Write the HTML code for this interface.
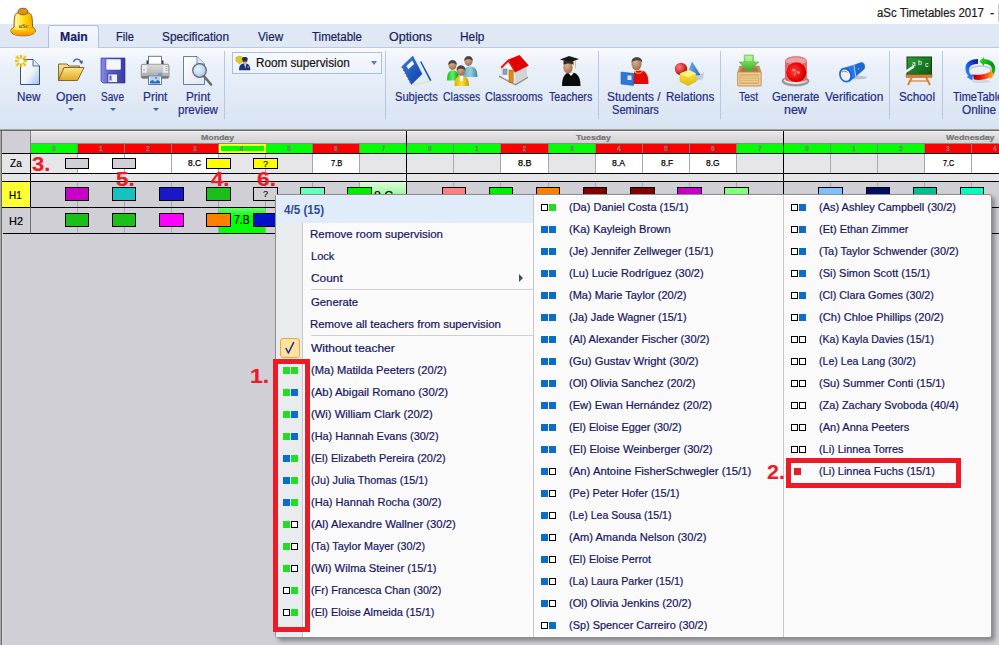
<!DOCTYPE html><html><head><meta charset="utf-8"><style>
*{margin:0;padding:0;box-sizing:border-box}
html,body{width:999px;height:645px;overflow:hidden;background:#d0cfd5;font-family:"Liberation Sans",sans-serif}
.ab{position:absolute}
.t{position:absolute;white-space:nowrap;-webkit-text-stroke:0.2px currentColor}
.sq{position:absolute;width:7px;height:7px}
.sq.o{border:1px solid #000;background:#fff}
.sq.g{background:#22dd22}
.sq.b{background:#0a6ccc}
.sq.r{background:#e0202c}
.box{position:absolute;border:1px solid #000}
</style></head><body>

<div class="ab" style="left:0;top:0;width:999px;height:24px;background:#fff"></div>
<div class="t" style="left:877.49px;top:6.54px;font-size:12px;line-height:12px;color:#1a1a1a;transform:scaleX(0.9537);transform-origin:0 0;">aSc Timetables 2017</div>
<div class="t" style="left:990.13px;top:6.54px;font-size:12px;line-height:12px;color:#1a1a1a;transform:scaleX(1.0544);transform-origin:0 0;">-</div>
<div class="ab" style="left:998px;top:4px;width:1px;height:18px;background:#c8c8c8"></div>
<div class="ab" style="left:0;top:24px;width:999px;height:24px;background:#dfe8f4;border-bottom:1px solid #b9cbe3"></div>
<div class="ab" style="left:48px;top:25px;width:51px;height:23px;background:linear-gradient(#f4f8fd,#e8eff8);border:1px solid #a9c1e2;border-bottom:none;border-radius:3px 3px 0 0"></div>
<div class="t" style="left:59.71px;top:30.74px;font-size:12px;line-height:12px;font-weight:bold;color:#15206a;transform:scaleX(1.0155);transform-origin:0 0;">Main</div>
<div class="t" style="left:115.82px;top:30.74px;font-size:12px;line-height:12px;color:#151e5e;transform:scaleX(0.9203);transform-origin:0 0;">File</div>
<div class="t" style="left:162.47px;top:30.74px;font-size:12px;line-height:12px;color:#151e5e;transform:scaleX(0.9847);transform-origin:0 0;">Specification</div>
<div class="t" style="left:257.94px;top:30.74px;font-size:12px;line-height:12px;color:#151e5e;transform:scaleX(0.9713);transform-origin:0 0;">View</div>
<div class="t" style="left:311.51px;top:30.74px;font-size:12px;line-height:12px;color:#151e5e;transform:scaleX(0.9568);transform-origin:0 0;">Timetable</div>
<div class="t" style="left:389.04px;top:30.74px;font-size:12px;line-height:12px;color:#151e5e;transform:scaleX(1.0401);transform-origin:0 0;">Options</div>
<div class="t" style="left:460.05px;top:30.74px;font-size:12px;line-height:12px;color:#151e5e;transform:scaleX(0.9905);transform-origin:0 0;">Help</div>
<div class="ab" style="left:0;top:48px;width:999px;height:81px;background:linear-gradient(#f8fafd,#e9f0f9 25%,#e0e9f5 65%,#d8e3f2)"></div>
<div class="ab" style="left:0;top:129px;width:999px;height:1px;background:#a2a2a2"></div>
<div class="ab" style="left:0;top:130px;width:999px;height:1px;background:#686868"></div>
<div class="ab" style="left:224px;top:51px;width:1px;height:68px;background:#b6c8e0"></div>
<div class="ab" style="left:385px;top:51px;width:1px;height:68px;background:#b6c8e0"></div>
<div class="ab" style="left:598px;top:51px;width:1px;height:68px;background:#b6c8e0"></div>
<div class="ab" style="left:720px;top:51px;width:1px;height:68px;background:#b6c8e0"></div>
<div class="ab" style="left:889px;top:51px;width:1px;height:68px;background:#b6c8e0"></div>
<div class="ab" style="left:942px;top:51px;width:1px;height:68px;background:#b6c8e0"></div>
<div class="t" style="left:16.66px;top:90.59px;font-size:12px;line-height:12px;color:#1f2c84;transform:scaleX(0.9740);transform-origin:0 0;">New</div>
<div class="t" style="left:55.85px;top:90.59px;font-size:12px;line-height:12px;color:#1f2c84;transform:scaleX(1.0136);transform-origin:0 0;">Open</div>
<div class="t" style="left:100.75px;top:90.59px;font-size:12px;line-height:12px;color:#1f2c84;transform:scaleX(0.8409);transform-origin:0 0;">Save</div>
<div class="t" style="left:142.55px;top:90.59px;font-size:12px;line-height:12px;color:#1f2c84;transform:scaleX(0.9898);transform-origin:0 0;">Print</div>
<div class="t" style="left:185.81px;top:90.59px;font-size:12px;line-height:12px;color:#1f2c84;transform:scaleX(0.9835);transform-origin:0 0;">Print</div>
<div class="t" style="left:178.00px;top:103.84px;font-size:12px;line-height:12px;color:#1f2c84;transform:scaleX(0.9663);transform-origin:0 0;">preview</div>
<div class="t" style="left:395.10px;top:90.59px;font-size:12px;line-height:12px;color:#1f2c84;transform:scaleX(0.9277);transform-origin:0 0;">Subjects</div>
<div class="t" style="left:442.88px;top:90.59px;font-size:12px;line-height:12px;color:#1f2c84;transform:scaleX(0.8718);transform-origin:0 0;">Classes</div>
<div class="t" style="left:485.15px;top:90.59px;font-size:12px;line-height:12px;color:#1f2c84;transform:scaleX(0.9111);transform-origin:0 0;">Classrooms</div>
<div class="t" style="left:548.73px;top:90.59px;font-size:12px;line-height:12px;color:#1f2c84;transform:scaleX(0.8875);transform-origin:0 0;">Teachers</div>
<div class="t" style="left:607.46px;top:90.59px;font-size:12px;line-height:12px;color:#1f2c84;transform:scaleX(0.9914);transform-origin:0 0;">Students /</div>
<div class="t" style="left:611.50px;top:103.84px;font-size:12px;line-height:12px;color:#1f2c84;transform:scaleX(0.9248);transform-origin:0 0;">Seminars</div>
<div class="t" style="left:665.67px;top:90.59px;font-size:12px;line-height:12px;color:#1f2c84;transform:scaleX(0.9638);transform-origin:0 0;">Relations</div>
<div class="t" style="left:739.04px;top:90.59px;font-size:12px;line-height:12px;color:#1f2c84;transform:scaleX(0.8657);transform-origin:0 0;">Test</div>
<div class="t" style="left:771.73px;top:90.59px;font-size:12px;line-height:12px;color:#1f2c84;transform:scaleX(0.9468);transform-origin:0 0;">Generate</div>
<div class="t" style="left:784.19px;top:103.84px;font-size:12px;line-height:12px;color:#1f2c84;transform:scaleX(1.0358);transform-origin:0 0;">new</div>
<div class="t" style="left:824.94px;top:90.59px;font-size:12px;line-height:12px;color:#1f2c84;transform:scaleX(0.9941);transform-origin:0 0;">Verification</div>
<div class="t" style="left:899.47px;top:90.59px;font-size:12px;line-height:12px;color:#1f2c84;transform:scaleX(0.9819);transform-origin:0 0;">School</div>
<div class="t" style="left:952.73px;top:90.59px;font-size:12px;line-height:12px;color:#1f2c84;transform:scaleX(0.9139);transform-origin:0 0;">TimeTables</div>
<div class="t" style="left:962.47px;top:103.84px;font-size:12px;line-height:12px;color:#1f2c84;transform:scaleX(0.9821);transform-origin:0 0;">Online</div>
<div class="ab" style="left:67.5px;top:108px;width:0;height:0;border-left:3px solid transparent;border-right:3px solid transparent;border-top:3.5px solid #40609e"></div>
<div class="ab" style="left:109.5px;top:108px;width:0;height:0;border-left:3px solid transparent;border-right:3px solid transparent;border-top:3.5px solid #40609e"></div>
<div class="ab" style="left:152.5px;top:108px;width:0;height:0;border-left:3px solid transparent;border-right:3px solid transparent;border-top:3.5px solid #40609e"></div>
<div class="ab" style="left:232px;top:52px;width:150px;height:22px;border:1px solid #a7bfdf;background:linear-gradient(#f6f9fd,#edf2f9)"></div>
<div class="t" style="left:256.06px;top:56.84px;font-size:12px;line-height:12px;color:#141414;transform:scaleX(0.9754);transform-origin:0 0;">Room supervision</div>
<div class="ab" style="left:371px;top:61px;width:0;height:0;border-left:3.5px solid transparent;border-right:3.5px solid transparent;border-top:4px solid #5a7ab8"></div>

<svg class="ab" style="left:0;top:0" width="999" height="130" viewBox="0 0 999 130">
<defs>
 <linearGradient id="bellg" x1="0" y1="0" x2="1" y2="0"><stop offset="0" stop-color="#f7d020"/><stop offset=".3" stop-color="#fff270"/><stop offset=".6" stop-color="#ffd400"/><stop offset="1" stop-color="#e8a000"/></linearGradient>
 <linearGradient id="rimg" x1="0" y1="0" x2="0" y2="1"><stop offset="0" stop-color="#ffd000"/><stop offset="1" stop-color="#ff8c00"/></linearGradient>
 <linearGradient id="pageg" x1="0" y1="0" x2="1" y2="1"><stop offset="0" stop-color="#ffffff"/><stop offset=".55" stop-color="#eef3fb"/><stop offset="1" stop-color="#9cc0ee"/></linearGradient>
 <linearGradient id="pvg" x1="0" y1="0" x2="1" y2="1"><stop offset="0" stop-color="#ffffff"/><stop offset="1" stop-color="#dfe6ef"/></linearGradient>
 <linearGradient id="foldg" x1="0" y1="0" x2="0" y2="1"><stop offset="0" stop-color="#f6e2a0"/><stop offset="1" stop-color="#d8a830"/></linearGradient>
 <linearGradient id="foldf" x1="0" y1="0" x2="0" y2="1"><stop offset="0" stop-color="#ffe68a"/><stop offset="1" stop-color="#e0a820"/></linearGradient>
 <linearGradient id="saveg" x1="0" y1="0" x2="1" y2="0"><stop offset="0" stop-color="#8c8ce6"/><stop offset=".4" stop-color="#5a5ac8"/><stop offset="1" stop-color="#3a3aa8"/></linearGradient>
 <linearGradient id="prg" x1="0" y1="0" x2="0" y2="1"><stop offset="0" stop-color="#dcdcdc"/><stop offset="1" stop-color="#b8b8b8"/></linearGradient>
 <radialGradient id="lensg" cx=".4" cy=".4" r=".7"><stop offset="0" stop-color="#eaf4ff"/><stop offset="1" stop-color="#9cc4f0"/></radialGradient>
 <linearGradient id="bookg" x1="0" y1="0" x2="1" y2="1"><stop offset="0" stop-color="#3a7ae0"/><stop offset="1" stop-color="#0a40a8"/></linearGradient>
 <radialGradient id="skin" cx=".4" cy=".35" r=".7"><stop offset="0" stop-color="#e0b090"/><stop offset="1" stop-color="#9a6a48"/></radialGradient>
 <linearGradient id="grn" x1="0" y1="0" x2="1" y2="0"><stop offset="0" stop-color="#20c020"/><stop offset=".5" stop-color="#60f060"/><stop offset="1" stop-color="#109010"/></linearGradient>
 <linearGradient id="teal" x1="0" y1="0" x2="1" y2="0"><stop offset="0" stop-color="#5aa8c0"/><stop offset=".5" stop-color="#9ad0e0"/><stop offset="1" stop-color="#3a88a0"/></linearGradient>
 <linearGradient id="yel" x1="0" y1="0" x2="1" y2="0"><stop offset="0" stop-color="#d8b000"/><stop offset=".5" stop-color="#ffe040"/><stop offset="1" stop-color="#c89800"/></linearGradient>
 <linearGradient id="redb" x1="0" y1="0" x2="1" y2="1"><stop offset="0" stop-color="#ff3030"/><stop offset="1" stop-color="#c00000"/></linearGradient>
 <radialGradient id="sph" cx=".35" cy=".35" r=".7"><stop offset="0" stop-color="#ff8080"/><stop offset="1" stop-color="#b00000"/></radialGradient>
 <linearGradient id="cone" x1="0" y1="0" x2="1" y2="0"><stop offset="0" stop-color="#80c0ff"/><stop offset="1" stop-color="#1a68c8"/></linearGradient>
 <linearGradient id="cube" x1="0" y1="0" x2="0" y2="1"><stop offset="0" stop-color="#fff060"/><stop offset="1" stop-color="#e0b800"/></linearGradient>
 <linearGradient id="arrg" x1="0" y1="0" x2="0" y2="1"><stop offset="0" stop-color="#a0f080"/><stop offset="1" stop-color="#30b020"/></linearGradient>
 <linearGradient id="boxg" x1="0" y1="0" x2="0" y2="1"><stop offset="0" stop-color="#f4d8a0"/><stop offset="1" stop-color="#d0a060"/></linearGradient>
 <radialGradient id="sirg" cx=".4" cy=".45" r=".65"><stop offset="0" stop-color="#ff4040"/><stop offset=".7" stop-color="#e80000"/><stop offset="1" stop-color="#a80000"/></radialGradient>
 <linearGradient id="flg" x1="0" y1="0" x2="0" y2="1"><stop offset="0" stop-color="#60a8f8"/><stop offset="1" stop-color="#1050b8"/></linearGradient>
 <linearGradient id="boardg" x1="0" y1="0" x2="1" y2="1"><stop offset="0" stop-color="#30a030"/><stop offset="1" stop-color="#0a5a1a"/></linearGradient>
 <linearGradient id="ttb" x1="1" y1="0" x2="0" y2="1"><stop offset="0" stop-color="#0a1a80"/><stop offset=".5" stop-color="#1a50f0"/><stop offset="1" stop-color="#3aa0ff"/></linearGradient>
 <linearGradient id="ttr" x1="0" y1="0" x2="1" y2="0"><stop offset="0" stop-color="#a00000"/><stop offset=".35" stop-color="#f01010"/><stop offset="1" stop-color="#ffb820"/></linearGradient>
 <linearGradient id="ttg" x1="0" y1="0" x2="1" y2="1"><stop offset="0" stop-color="#20f020"/><stop offset=".6" stop-color="#109010"/><stop offset="1" stop-color="#20c020"/></linearGradient>
</defs>

<!-- bell logo -->
<path d="M17,13 C14.5,14 14,18 14,27 C11.5,28.5 10.5,30 11,32 C13,35 18,35.8 23,35.8 C28,35.8 33,35 35.3,32 C35.8,30 34.8,28.5 32.5,27 C32.5,18 32,14 29,13 Z" fill="url(#bellg)" stroke="#8a5010" stroke-width=".9"/>
<path d="M13.5,28.5 C16,31 30,31 33,28.5 C35,30 35.5,31 35,32 C33,35 28,35.5 23,35.5 C18,35.5 13,35 11.3,32 C11,31 11.8,29.5 13.5,28.5 Z" fill="url(#rimg)"/>
<path d="M16.5,16 C16,20 16,24 16.5,27" stroke="#fffbe0" stroke-width="1.6" fill="none" opacity=".8"/>
<ellipse cx="23" cy="11.5" rx="5" ry="3.3" fill="#d89418" stroke="#7a4a10" stroke-width=".8"/>
<text x="23.5" y="27.5" font-size="6.5" font-weight="bold" text-anchor="middle" fill="#8a4a10" font-family="Liberation Serif" font-style="italic">aSc</text>

<!-- New -->
<path d="M20.5,59.5 L33,59.5 L39.5,66 L39.5,84.5 L20.5,84.5 Z" fill="url(#pageg)" stroke="#3c5274" stroke-width="1"/>
<path d="M33,59.5 L33,66 L39.5,66" fill="#dce8f8" stroke="#3c5274" stroke-width=".8"/>
<rect x="15" y="55" width="12" height="12" fill="#f4e070" opacity=".45"/>
<g stroke="#e8b400" stroke-width="1.6">
<line x1="21" y1="55" x2="21" y2="67"/><line x1="15" y1="61" x2="27" y2="61"/>
<line x1="16.5" y1="56.5" x2="25.5" y2="65.5"/><line x1="25.5" y1="56.5" x2="16.5" y2="65.5"/>
</g>
<circle cx="21" cy="61" r="2.6" fill="#fffce0"/>

<!-- Open -->
<path d="M58.5,80.5 L58.5,64 L67,64 L69,66 L79.5,66 L79.5,69" fill="url(#foldg)" stroke="#7a5a20" stroke-width=".9"/>
<path d="M58.5,80.5 L64,67.5 L84,67.5 L77.5,80.5 Z" fill="url(#foldf)" stroke="#7a5a20" stroke-width=".9"/>
<path d="M73.5,62 C74.5,58.5 79,58 81,61.5" fill="none" stroke="#3a5a98" stroke-width="1.2"/>
<path d="M79,61.5 L83,60.5 L82,64.5 Z" fill="#3a5a98"/>

<!-- Save -->
<path d="M101,58 L125,58 L125,83 L103,83 L101,81 Z" fill="url(#saveg)" stroke="#2a2a88" stroke-width=".6"/>
<rect x="106" y="59" width="15" height="11" rx="1" fill="#f4f6fa" stroke="#4a4ab0" stroke-width=".5"/>
<rect x="108" y="74" width="9.5" height="8.5" fill="#eef0f6" stroke="#20207a" stroke-width=".6"/>
<rect x="109.5" y="75.5" width="2" height="5" fill="#5a5ac8"/>

<!-- Print -->
<rect x="146.5" y="60.5" width="2.5" height="4" fill="#3a3a3a"/><rect x="161" y="60.5" width="2.5" height="4" fill="#3a3a3a"/>
<rect x="148.5" y="56.3" width="13" height="8.5" fill="#fff" stroke="#58708c" stroke-width=".9"/>
<rect x="141.3" y="64.3" width="27.6" height="14" rx="1.5" fill="#ececec" stroke="#686868" stroke-width=".8"/>
<rect x="146.8" y="64.6" width="16.4" height="9" fill="url(#prg)"/>
<rect x="141.7" y="72.8" width="26.8" height="3.4" fill="#b4b4b4"/>
<rect x="141.7" y="76" width="26.8" height="2" fill="#7a7a7a"/>
<rect x="158" y="73.3" width="4.2" height="1.5" fill="#4a9af0"/>
<g fill="#9a9a9a"><rect x="165.5" y="66" width="2" height=".9"/><rect x="165.5" y="68" width="2" height=".9"/><rect x="165.5" y="70" width="2" height=".9"/><rect x="143" y="69.5" width="2" height=".9"/></g>
<rect x="148.5" y="76" width="13" height="8.5" fill="#fff" stroke="#58708c" stroke-width=".9"/>
<rect x="150" y="77" width="10" height="6.5" fill="#a8d8f8"/>
<path d="M150,83.5 L150,81.5 L152.5,80 L155,82 L157.5,80 L160,81.5 L160,83.5 Z" fill="#2a6ac8"/>
<circle cx="156" cy="77.8" r="1" fill="#e85030"/>

<!-- Print preview -->
<path d="M183.5,56.5 L197,56.5 L204.5,64 L204.5,84.5 L183.5,84.5 Z" fill="url(#pvg)" stroke="#5a7090" stroke-width=".9"/>
<path d="M197,56.5 L197,64 L204.5,64" fill="#d8e6f6" stroke="#5a7090" stroke-width=".7"/>
<line x1="203" y1="75" x2="211" y2="84.5" stroke="#6a6a6a" stroke-width="2.6" stroke-linecap="round"/>
<circle cx="199.5" cy="70.5" r="6.8" fill="url(#lensg)" stroke="#6a6a6a" stroke-width="1.3"/>

<!-- Room supervision icon -->
<path d="M236,57.2 L239.5,56 L243,57.2 L243.2,61 L239.5,64 L235.8,61 Z" fill="#e2c628" stroke="#b89a10" stroke-width=".4"/>
<path d="M244.5,64 L246,64 L245.3,67.5 Z" fill="#333"/>
<path d="M239,70.2 C239,65.5 241,63.6 244.7,63.6 C248.4,63.6 250.3,65.5 250.3,70.2 Z" fill="#1c3478"/>
<path d="M244,63.6 L245.3,68.5 L246.5,63.6 Z" fill="#c8d4e8"/>
<ellipse cx="244.8" cy="61.3" rx="2.3" ry="2.4" fill="#dca878"/>
<rect x="242.5" y="60.2" width="4.8" height="1.3" fill="#111"/>
<path d="M242,59 C242,56.4 247.8,56.4 247.8,59 L247.4,60 L242.4,60 Z" fill="#1a2a6c"/>
<rect x="247.5" y="66.5" width="1.5" height="1" fill="#e0c040"/>

<!-- Subjects -->
<path d="M416,61.5 L421.2,61.2 L431.5,80.5 L412,85.6 L422,74 Z" fill="#dfeef2" stroke="#c8d8e0" stroke-width=".3"/>
<path d="M421.2,61.2 L431.5,80.5 L430,81 L420.2,62 Z" fill="#1a4a9a"/>
<path d="M412,84.6 L430.5,80.6 L431,81.6 L412.5,85.8 Z" fill="#e8dcc8"/>
<path d="M412.8,56.1 L401.9,66.4 L411.4,84.6 L422,74 Z" fill="url(#bookg)" stroke="#0a3a90" stroke-width=".4"/>
<path d="M406.4,66.1 L412.2,60.5 L414.2,63.9 L408.3,69.2 Z" fill="#f8f8f4"/>
<g stroke="#666" stroke-width=".9"><line x1="401.5" y1="67.5" x2="403.5" y2="67"/><line x1="403" y1="70.5" x2="405" y2="70"/><line x1="404.6" y1="73.5" x2="406.6" y2="73"/><line x1="406.2" y1="76.5" x2="408.2" y2="76"/><line x1="407.8" y1="79.5" x2="409.8" y2="79"/><line x1="409.4" y1="82.5" x2="411.4" y2="82"/></g>

<!-- Classes -->
<path d="M463,77 C463,68 466,66.5 470,66.5 C474,66.5 477.5,68 477.5,77 Z" fill="url(#teal)"/>
<ellipse cx="468.5" cy="61" rx="4" ry="5" fill="url(#skin)"/>
<path d="M464.3,61 C463.5,54.5 473.8,54.5 472.7,61 C471.5,58.5 466,58.5 464.3,61 Z" fill="#454545"/>
<path d="M447,80.5 C447,72 449.5,70.5 453,70.5 C456.5,70.5 459,72 459,80.5 Z" fill="url(#grn)"/>
<ellipse cx="452.5" cy="65" rx="4" ry="5" fill="url(#skin)"/>
<path d="M448.3,65 C447.5,58.5 457.8,58.5 456.7,65 C455.5,62.5 450,62.5 448.3,65 Z" fill="#454545"/>
<path d="M454.5,86 C454.5,78 457,76 461.5,76 C466,76 469,78 469,86 Z" fill="url(#yel)"/>
<rect x="460" y="76" width="3" height="5" fill="#fff"/>
<ellipse cx="461" cy="70.5" rx="4.2" ry="5.2" fill="url(#skin)"/>
<path d="M456.7,70.5 C455.8,63.8 466.3,63.8 465.3,70.5 C464,68 458,68 456.7,70.5 Z" fill="#454545"/>

<!-- Classrooms -->
<path d="M499,77 L515.5,85.5 L528,78 L528,76.5 L515.5,83.5 L499,75.5 Z" fill="#8a8a8a"/>
<path d="M502,67 L508.5,60.5 L515.5,71 L515.5,84 L502,77 Z" fill="#f6f6f6" stroke="#bdbdbd" stroke-width=".4"/>
<path d="M515.5,71 L527,65 L527,77 L515.5,84 Z" fill="#d4d4d4"/>
<path d="M508.5,59.5 L519.5,55 L528.8,65.5 L515.5,72.3 Z" fill="#e00000"/>
<path d="M500.5,67 L508.5,59 L516,72.3 L514.8,72.6 L508.3,62 L501.8,68.4 Z" fill="#ee1010"/>
<rect x="503" y="69" width="4" height="5.5" fill="#7aa4e8" stroke="#8a6a3a" stroke-width=".5"/>
<rect x="509" y="70" width="4.2" height="12.5" fill="#e08a10" stroke="#9a5a10" stroke-width=".5"/>

<!-- Teachers -->
<path d="M562,86 C562,75 566,72.5 571,72.5 C576,72.5 580.5,75 580.5,86 Z" fill="#0a0a0a"/>
<path d="M568,72.5 L571,76 L574,72.5 Z" fill="#fff"/>
<ellipse cx="568" cy="67.5" rx="4.6" ry="6" fill="url(#skin)"/>
<path d="M560,59.5 L569,56 L579,59 L570,62.5 Z" fill="#1a1a1a"/>
<path d="M563.5,61 L563.5,65 C566,63 571,63 573.5,65 L573.5,61.5 Z" fill="#2a2a2a"/>
<line x1="575.5" y1="60.5" x2="575.5" y2="68" stroke="#e8c040" stroke-width="1"/>

<!-- Students -->
<path d="M631,84 C631,73 635,70.5 640,70.5 C645,70.5 648.5,73 648.5,84 Z" fill="#e00a0a"/>
<path d="M634,71 C636,74 641,74 642.5,71" fill="none" stroke="#f0c030" stroke-width="1"/>
<ellipse cx="636.5" cy="64" rx="5" ry="6.5" fill="url(#skin)"/>
<path d="M631.6,62.5 C630.8,55.5 643,55.5 642.2,62.5 C640.5,59.8 634,59.5 631.6,62.5 Z" fill="#454545"/>
<path d="M621,72 L634,73.5 L633.5,85.5 L621,84 Z" fill="#2a78d8" stroke="#1a50a0" stroke-width=".5"/>
<rect x="627.5" y="75.5" width="4" height="4.5" fill="#f8e0c8"/>

<!-- Relations -->
<path d="M694,78 L704,72 L703,79 L696,81 Z" fill="#c8ccd0"/>
<path d="M692,61.5 L700.5,75 L686,77 Z" fill="url(#cone)"/>
<circle cx="681" cy="69" r="6.2" fill="url(#sph)"/>
<path d="M680,73.5 L689,70 L696,73.5 L696,81.5 L688,85.5 L680,81.5 Z" fill="url(#cube)" stroke="#c8a000" stroke-width=".4"/>
<path d="M680,73.5 L689,70 L696,73.5 L688,77 Z" fill="#fff38a"/>

<!-- Test -->
<path d="M737.8,72.5 L739.8,66 L759.2,66 L761.2,72.5 Z" fill="#c8965a" stroke="#a87840" stroke-width=".5"/>
<path d="M740.5,71.5 L741.5,67.5 L757.5,67.5 L758.5,71.5 Z" fill="#a87a48"/>
<rect x="737.6" y="72" width="23.6" height="14" rx="1" fill="#f2cc8c" stroke="#a87840" stroke-width=".7"/>
<rect x="740" y="74.8" width="18.8" height="8.6" fill="#e0b474" stroke="#c09050" stroke-width=".4"/>
<g stroke="#f6d8a0" stroke-width=".8"><line x1="740.5" y1="77" x2="758.5" y2="77"/><line x1="740.5" y1="79.3" x2="758.5" y2="79.3"/><line x1="740.5" y1="81.6" x2="758.5" y2="81.6"/></g>
<path d="M744.2,55 L753.4,55 L753.4,62 L758.8,62 L748.8,71.6 L739,62 L744.2,62 Z" fill="url(#arrg)" stroke="#48a838" stroke-width=".5"/>
<rect x="745.5" y="56" width="6.5" height="5" fill="#c8f8b0" opacity=".6"/>

<!-- Generate new -->
<ellipse cx="795.5" cy="81" rx="13.5" ry="5" fill="#a0a0a0" stroke="#6e6e6e" stroke-width=".6"/>
<ellipse cx="795.5" cy="80.3" rx="11.5" ry="3.6" fill="#f6f6f6"/>
<path d="M785,79.5 L785,61.5 C785,54.5 807,54.5 807,61.5 L807,79.5 C807,83 785,83 785,79.5 Z" fill="#e06a72"/>
<path d="M785.5,61.5 C785.5,56 806.5,56 806.5,61.5 C806.5,64.5 785.5,64.5 785.5,61.5 Z" fill="#eda0a6"/>
<circle cx="796.3" cy="72.3" r="10" fill="url(#sirg)"/>
<circle cx="793.5" cy="70" r="1.3" fill="#f8c0c0" opacity=".8"/>
<circle cx="798.5" cy="72.5" r="1.3" fill="#f8c0c0" opacity=".8"/>
<path d="M794,76 C795.5,73.5 796,72 795.5,70" stroke="#f0a0a0" stroke-width=".8" fill="none"/>

<!-- Verification -->
<ellipse cx="857" cy="77.5" rx="10" ry="1.7" fill="#a8acb8" opacity=".65"/>
<path d="M853.5,65.2 L861,62.5 C864,61.8 865.8,66 864.2,69 L855.5,76.8 Z" fill="#1a68d8" stroke="#1450b0" stroke-width=".4"/>
<path d="M845,67.5 L854,64.8 L855.8,76.8 L849,82.2 Z" fill="#2a78e8"/>
<path d="M854,64.8 L855.8,76.8" stroke="#c8d8f0" stroke-width=".9"/>
<circle cx="858.5" cy="69" r=".8" fill="#f0a040"/>
<ellipse cx="845.5" cy="75" rx="6" ry="7.3" transform="rotate(-22 845.5 75)" fill="#1a6ad8" stroke="#0a4ab0" stroke-width=".4"/>
<ellipse cx="845.5" cy="75.2" rx="4.5" ry="5.8" transform="rotate(-22 845.5 75.2)" fill="#f0f0f0"/>
<path d="M842,72 C843.5,71 846,71 847.5,72.5" stroke="#808080" stroke-width=".9" fill="none"/>

<!-- School -->
<rect x="907" y="57" width="24.5" height="17.5" fill="url(#boardg)" stroke="#1a3a1a" stroke-width="1"/>
<text x="912" y="66" font-size="6.5" fill="#fff" font-family="Liberation Sans">a</text>
<text x="918" y="65" font-size="7" fill="#fff" font-family="Liberation Sans">b</text>
<text x="925" y="67" font-size="7" fill="#fff" font-family="Liberation Sans">c</text>
<rect x="906" y="74.5" width="26" height="3" fill="#d8802a" stroke="#905020" stroke-width=".4"/>
<g stroke="#d8802a" stroke-width="2"><line x1="912" y1="77" x2="908" y2="85"/><line x1="926" y1="77" x2="930" y2="85"/><line x1="910" y1="81" x2="928" y2="81" stroke-width="1.2"/></g>
<line x1="904.5" y1="72.5" x2="913" y2="67" stroke="#f0f0f0" stroke-width="2.6" stroke-linecap="round"/>

<!-- TimeTables Online -->
<ellipse cx="980.5" cy="72" rx="12" ry="6" fill="none" stroke="#c4c8d0" stroke-width="1.6"/>
<ellipse cx="981" cy="81.5" rx="9" ry="1.6" fill="#c8ccd4" opacity=".7"/>
<path d="M978,59 C971,59 966,62 965.5,67 C965,71 966.5,74 968.5,76 L966.5,77 L972.3,80.5 L973,74.3 L971,75 C969.2,73 968.6,71 969,68.5 C970,65.5 973,64 978,63.8 Z" fill="url(#ttb)"/>
<path d="M979.4,61.3 L984,57 L984,59 C990,59.5 994.5,62.5 995.2,67 C995.7,70.5 994.5,73.5 993,75.5 L991,73.5 C992,71 992.3,69 991.5,67.5 C990.5,65 987.5,64 984,63.8 L984,66 Z" fill="url(#ttg)"/>
<path d="M973.2,74.4 C980,75.5 987,74 990.3,71.5 L990,69.8 L994.2,74.6 L990.5,79.2 L990.3,77.2 C986,79.5 980,80.5 973.8,79.6 Z" fill="url(#ttr)"/>
</svg>

<div class="ab" style="left:0;top:131px;width:1px;height:514px;background:#a8a8a8"></div>
<div class="ab" style="left:1px;top:131px;width:1px;height:514px;background:#6a6a6a"></div>
<div class="ab" style="left:2px;top:234px;width:1px;height:411px;background:#dadade"></div>
<div class="ab" style="left:2px;top:131px;width:28px;height:22px;background:#d0cfd5"></div>
<div class="ab" style="left:31px;top:131px;width:968px;height:12px;background:linear-gradient(#f8f8f8,#e6e6e8 12%,#d2d2d6)"></div>
<div class="ab" style="left:31px;top:143px;width:968px;height:1px;background:#8c8c8c"></div>
<div class="ab" style="left:31px;top:144px;width:47px;height:9px;background:#00ff00"></div>
<div class="t" style="left:31px;top:145px;width:46px;text-align:center;font-size:6.5px;line-height:8px;font-weight:bold;color:#7c7c7c;-webkit-text-stroke:0.3px #7c7c7c">0</div>
<div class="ab" style="left:31px;top:154px;width:47px;height:19px;background:#e6e6e8"></div>
<div class="ab" style="left:78px;top:144px;width:47px;height:9px;background:#ff0000"></div>
<div class="ab" style="left:77px;top:143px;width:1px;height:10px;background:#808080"></div>
<div class="t" style="left:78px;top:145px;width:46px;text-align:center;font-size:6.5px;line-height:8px;font-weight:bold;color:#7c7c7c;-webkit-text-stroke:0.3px #7c7c7c">1</div>
<div class="ab" style="left:78px;top:154px;width:47px;height:19px;background:#ffffff"></div>
<div class="ab" style="left:77px;top:154px;width:1px;height:19px;background:#a8a8a8"></div>
<div class="ab" style="left:77px;top:182px;width:1px;height:51px;background:#a8a8ac"></div>
<div class="ab" style="left:125px;top:144px;width:47px;height:9px;background:#ff0000"></div>
<div class="ab" style="left:124px;top:143px;width:1px;height:10px;background:#808080"></div>
<div class="t" style="left:125px;top:145px;width:46px;text-align:center;font-size:6.5px;line-height:8px;font-weight:bold;color:#7c7c7c;-webkit-text-stroke:0.3px #7c7c7c">2</div>
<div class="ab" style="left:125px;top:154px;width:47px;height:19px;background:#ffffff"></div>
<div class="ab" style="left:124px;top:154px;width:1px;height:19px;background:#a8a8a8"></div>
<div class="ab" style="left:124px;top:182px;width:1px;height:51px;background:#a8a8ac"></div>
<div class="ab" style="left:172px;top:144px;width:47px;height:9px;background:#ff0000"></div>
<div class="ab" style="left:171px;top:143px;width:1px;height:10px;background:#808080"></div>
<div class="t" style="left:172px;top:145px;width:46px;text-align:center;font-size:6.5px;line-height:8px;font-weight:bold;color:#7c7c7c;-webkit-text-stroke:0.3px #7c7c7c">3</div>
<div class="ab" style="left:172px;top:154px;width:47px;height:19px;background:#ffffff"></div>
<div class="ab" style="left:171px;top:154px;width:1px;height:19px;background:#a8a8a8"></div>
<div class="ab" style="left:171px;top:182px;width:1px;height:51px;background:#a8a8ac"></div>
<div class="ab" style="left:219px;top:144px;width:47px;height:9px;background:#00ff00"></div>
<div class="ab" style="left:218px;top:143px;width:1px;height:10px;background:#808080"></div>
<div class="t" style="left:219px;top:145px;width:46px;text-align:center;font-size:6.5px;line-height:8px;font-weight:bold;color:#7c7c7c;-webkit-text-stroke:0.3px #7c7c7c">4</div>
<div class="ab" style="left:219px;top:154px;width:47px;height:19px;background:#e6e6e8"></div>
<div class="ab" style="left:218px;top:154px;width:1px;height:19px;background:#a8a8a8"></div>
<div class="ab" style="left:218px;top:182px;width:1px;height:51px;background:#a8a8ac"></div>
<div class="ab" style="left:266px;top:144px;width:47px;height:9px;background:#00ff00"></div>
<div class="ab" style="left:265px;top:143px;width:1px;height:10px;background:#808080"></div>
<div class="t" style="left:266px;top:145px;width:46px;text-align:center;font-size:6.5px;line-height:8px;font-weight:bold;color:#7c7c7c;-webkit-text-stroke:0.3px #7c7c7c">5</div>
<div class="ab" style="left:266px;top:154px;width:47px;height:19px;background:#e6e6e8"></div>
<div class="ab" style="left:265px;top:154px;width:1px;height:19px;background:#a8a8a8"></div>
<div class="ab" style="left:265px;top:182px;width:1px;height:51px;background:#a8a8ac"></div>
<div class="ab" style="left:313px;top:144px;width:47px;height:9px;background:#ff0000"></div>
<div class="ab" style="left:312px;top:143px;width:1px;height:10px;background:#808080"></div>
<div class="t" style="left:313px;top:145px;width:46px;text-align:center;font-size:6.5px;line-height:8px;font-weight:bold;color:#7c7c7c;-webkit-text-stroke:0.3px #7c7c7c">6</div>
<div class="ab" style="left:313px;top:154px;width:47px;height:19px;background:#ffffff"></div>
<div class="ab" style="left:312px;top:154px;width:1px;height:19px;background:#a8a8a8"></div>
<div class="ab" style="left:312px;top:182px;width:1px;height:51px;background:#a8a8ac"></div>
<div class="ab" style="left:360px;top:144px;width:48px;height:9px;background:#00ff00"></div>
<div class="ab" style="left:359px;top:143px;width:1px;height:10px;background:#808080"></div>
<div class="t" style="left:360px;top:145px;width:47px;text-align:center;font-size:6.5px;line-height:8px;font-weight:bold;color:#7c7c7c;-webkit-text-stroke:0.3px #7c7c7c">7</div>
<div class="ab" style="left:360px;top:154px;width:48px;height:19px;background:#e6e6e8"></div>
<div class="ab" style="left:359px;top:154px;width:1px;height:19px;background:#a8a8a8"></div>
<div class="ab" style="left:359px;top:182px;width:1px;height:51px;background:#a8a8ac"></div>
<div class="t" style="left:188.42px;top:159.30px;font-size:8.5px;line-height:8.5px;color:#000;transform:scaleX(0.9924);transform-origin:0 0;-webkit-text-stroke:0.25px #000">8.C</div>
<div class="t" style="left:330.93px;top:159.30px;font-size:8.5px;line-height:8.5px;color:#000;transform:scaleX(0.8824);transform-origin:0 0;-webkit-text-stroke:0.25px #000">7.B</div>
<div class="t" style="left:200.71px;top:134.07px;font-size:7px;line-height:7px;font-weight:bold;color:#767676;transform:scaleX(1.2500);transform-origin:0 0;">Monday</div>
<div class="ab" style="left:407px;top:144px;width:47px;height:9px;background:#00ff00"></div>
<div class="t" style="left:407px;top:145px;width:46px;text-align:center;font-size:6.5px;line-height:8px;font-weight:bold;color:#7c7c7c;-webkit-text-stroke:0.3px #7c7c7c">0</div>
<div class="ab" style="left:407px;top:154px;width:47px;height:19px;background:#e6e6e8"></div>
<div class="ab" style="left:454px;top:144px;width:47px;height:9px;background:#00ff00"></div>
<div class="ab" style="left:453px;top:143px;width:1px;height:10px;background:#808080"></div>
<div class="t" style="left:454px;top:145px;width:46px;text-align:center;font-size:6.5px;line-height:8px;font-weight:bold;color:#7c7c7c;-webkit-text-stroke:0.3px #7c7c7c">1</div>
<div class="ab" style="left:454px;top:154px;width:47px;height:19px;background:#e6e6e8"></div>
<div class="ab" style="left:453px;top:154px;width:1px;height:19px;background:#a8a8a8"></div>
<div class="ab" style="left:453px;top:182px;width:1px;height:51px;background:#a8a8ac"></div>
<div class="ab" style="left:501px;top:144px;width:48px;height:9px;background:#ff0000"></div>
<div class="ab" style="left:500px;top:143px;width:1px;height:10px;background:#808080"></div>
<div class="t" style="left:501px;top:145px;width:47px;text-align:center;font-size:6.5px;line-height:8px;font-weight:bold;color:#7c7c7c;-webkit-text-stroke:0.3px #7c7c7c">2</div>
<div class="ab" style="left:501px;top:154px;width:48px;height:19px;background:#ffffff"></div>
<div class="ab" style="left:500px;top:154px;width:1px;height:19px;background:#a8a8a8"></div>
<div class="ab" style="left:500px;top:182px;width:1px;height:51px;background:#a8a8ac"></div>
<div class="ab" style="left:549px;top:144px;width:47px;height:9px;background:#00ff00"></div>
<div class="ab" style="left:548px;top:143px;width:1px;height:10px;background:#808080"></div>
<div class="t" style="left:549px;top:145px;width:46px;text-align:center;font-size:6.5px;line-height:8px;font-weight:bold;color:#7c7c7c;-webkit-text-stroke:0.3px #7c7c7c">3</div>
<div class="ab" style="left:549px;top:154px;width:47px;height:19px;background:#e6e6e8"></div>
<div class="ab" style="left:548px;top:154px;width:1px;height:19px;background:#a8a8a8"></div>
<div class="ab" style="left:548px;top:182px;width:1px;height:51px;background:#a8a8ac"></div>
<div class="ab" style="left:596px;top:144px;width:47px;height:9px;background:#ff0000"></div>
<div class="ab" style="left:595px;top:143px;width:1px;height:10px;background:#808080"></div>
<div class="t" style="left:596px;top:145px;width:46px;text-align:center;font-size:6.5px;line-height:8px;font-weight:bold;color:#7c7c7c;-webkit-text-stroke:0.3px #7c7c7c">4</div>
<div class="ab" style="left:596px;top:154px;width:47px;height:19px;background:#ffffff"></div>
<div class="ab" style="left:595px;top:154px;width:1px;height:19px;background:#a8a8a8"></div>
<div class="ab" style="left:595px;top:182px;width:1px;height:51px;background:#a8a8ac"></div>
<div class="ab" style="left:643px;top:144px;width:47px;height:9px;background:#ff0000"></div>
<div class="ab" style="left:642px;top:143px;width:1px;height:10px;background:#808080"></div>
<div class="t" style="left:643px;top:145px;width:46px;text-align:center;font-size:6.5px;line-height:8px;font-weight:bold;color:#7c7c7c;-webkit-text-stroke:0.3px #7c7c7c">5</div>
<div class="ab" style="left:643px;top:154px;width:47px;height:19px;background:#ffffff"></div>
<div class="ab" style="left:642px;top:154px;width:1px;height:19px;background:#a8a8a8"></div>
<div class="ab" style="left:642px;top:182px;width:1px;height:51px;background:#a8a8ac"></div>
<div class="ab" style="left:690px;top:144px;width:47px;height:9px;background:#ff0000"></div>
<div class="ab" style="left:689px;top:143px;width:1px;height:10px;background:#808080"></div>
<div class="t" style="left:690px;top:145px;width:46px;text-align:center;font-size:6.5px;line-height:8px;font-weight:bold;color:#7c7c7c;-webkit-text-stroke:0.3px #7c7c7c">6</div>
<div class="ab" style="left:690px;top:154px;width:47px;height:19px;background:#ffffff"></div>
<div class="ab" style="left:689px;top:154px;width:1px;height:19px;background:#a8a8a8"></div>
<div class="ab" style="left:689px;top:182px;width:1px;height:51px;background:#a8a8ac"></div>
<div class="ab" style="left:737px;top:144px;width:47px;height:9px;background:#00ff00"></div>
<div class="ab" style="left:736px;top:143px;width:1px;height:10px;background:#808080"></div>
<div class="t" style="left:737px;top:145px;width:46px;text-align:center;font-size:6.5px;line-height:8px;font-weight:bold;color:#7c7c7c;-webkit-text-stroke:0.3px #7c7c7c">7</div>
<div class="ab" style="left:737px;top:154px;width:47px;height:19px;background:#e6e6e8"></div>
<div class="ab" style="left:736px;top:154px;width:1px;height:19px;background:#a8a8a8"></div>
<div class="ab" style="left:736px;top:182px;width:1px;height:51px;background:#a8a8ac"></div>
<div class="t" style="left:518.40px;top:159.30px;font-size:8.5px;line-height:8.5px;color:#000;transform:scaleX(1.0551);transform-origin:0 0;-webkit-text-stroke:0.25px #000">8.B</div>
<div class="t" style="left:612.21px;top:159.30px;font-size:8.5px;line-height:8.5px;color:#000;transform:scaleX(1.0188);transform-origin:0 0;-webkit-text-stroke:0.25px #000">8.A</div>
<div class="t" style="left:660.62px;top:159.30px;font-size:8.5px;line-height:8.5px;color:#000;transform:scaleX(0.9948);transform-origin:0 0;-webkit-text-stroke:0.25px #000">8.F</div>
<div class="t" style="left:706.42px;top:159.30px;font-size:8.5px;line-height:8.5px;color:#000;transform:scaleX(0.9915);transform-origin:0 0;-webkit-text-stroke:0.25px #000">8.G</div>
<div class="t" style="left:576.22px;top:134.07px;font-size:7px;line-height:7px;font-weight:bold;color:#767676;transform:scaleX(1.2500);transform-origin:0 0;">Tuesday</div>
<div class="ab" style="left:784px;top:144px;width:47px;height:9px;background:#00ff00"></div>
<div class="t" style="left:784px;top:145px;width:46px;text-align:center;font-size:6.5px;line-height:8px;font-weight:bold;color:#7c7c7c;-webkit-text-stroke:0.3px #7c7c7c">0</div>
<div class="ab" style="left:784px;top:154px;width:47px;height:19px;background:#e6e6e8"></div>
<div class="ab" style="left:831px;top:144px;width:47px;height:9px;background:#00ff00"></div>
<div class="ab" style="left:830px;top:143px;width:1px;height:10px;background:#808080"></div>
<div class="t" style="left:831px;top:145px;width:46px;text-align:center;font-size:6.5px;line-height:8px;font-weight:bold;color:#7c7c7c;-webkit-text-stroke:0.3px #7c7c7c">1</div>
<div class="ab" style="left:831px;top:154px;width:47px;height:19px;background:#e6e6e8"></div>
<div class="ab" style="left:830px;top:154px;width:1px;height:19px;background:#a8a8a8"></div>
<div class="ab" style="left:830px;top:182px;width:1px;height:51px;background:#a8a8ac"></div>
<div class="ab" style="left:878px;top:144px;width:47px;height:9px;background:#00ff00"></div>
<div class="ab" style="left:877px;top:143px;width:1px;height:10px;background:#808080"></div>
<div class="t" style="left:878px;top:145px;width:46px;text-align:center;font-size:6.5px;line-height:8px;font-weight:bold;color:#7c7c7c;-webkit-text-stroke:0.3px #7c7c7c">2</div>
<div class="ab" style="left:878px;top:154px;width:47px;height:19px;background:#e6e6e8"></div>
<div class="ab" style="left:877px;top:154px;width:1px;height:19px;background:#a8a8a8"></div>
<div class="ab" style="left:877px;top:182px;width:1px;height:51px;background:#a8a8ac"></div>
<div class="ab" style="left:925px;top:144px;width:47px;height:9px;background:#ff0000"></div>
<div class="ab" style="left:924px;top:143px;width:1px;height:10px;background:#808080"></div>
<div class="t" style="left:925px;top:145px;width:46px;text-align:center;font-size:6.5px;line-height:8px;font-weight:bold;color:#7c7c7c;-webkit-text-stroke:0.3px #7c7c7c">3</div>
<div class="ab" style="left:925px;top:154px;width:47px;height:19px;background:#ffffff"></div>
<div class="ab" style="left:924px;top:154px;width:1px;height:19px;background:#a8a8a8"></div>
<div class="ab" style="left:924px;top:182px;width:1px;height:51px;background:#a8a8ac"></div>
<div class="ab" style="left:972px;top:144px;width:47px;height:9px;background:#ff0000"></div>
<div class="ab" style="left:971px;top:143px;width:1px;height:10px;background:#808080"></div>
<div class="t" style="left:972px;top:145px;width:46px;text-align:center;font-size:6.5px;line-height:8px;font-weight:bold;color:#7c7c7c;-webkit-text-stroke:0.3px #7c7c7c">4</div>
<div class="ab" style="left:972px;top:154px;width:47px;height:19px;background:#ffffff"></div>
<div class="ab" style="left:971px;top:154px;width:1px;height:19px;background:#a8a8a8"></div>
<div class="ab" style="left:971px;top:182px;width:1px;height:51px;background:#a8a8ac"></div>
<div class="ab" style="left:1019px;top:144px;width:47px;height:9px;background:#ff0000"></div>
<div class="ab" style="left:1018px;top:143px;width:1px;height:10px;background:#808080"></div>
<div class="t" style="left:1019px;top:145px;width:46px;text-align:center;font-size:6.5px;line-height:8px;font-weight:bold;color:#7c7c7c;-webkit-text-stroke:0.3px #7c7c7c">5</div>
<div class="ab" style="left:1019px;top:154px;width:47px;height:19px;background:#ffffff"></div>
<div class="ab" style="left:1018px;top:154px;width:1px;height:19px;background:#a8a8a8"></div>
<div class="ab" style="left:1018px;top:182px;width:1px;height:51px;background:#a8a8ac"></div>
<div class="ab" style="left:1066px;top:144px;width:47px;height:9px;background:#ff0000"></div>
<div class="ab" style="left:1065px;top:143px;width:1px;height:10px;background:#808080"></div>
<div class="t" style="left:1066px;top:145px;width:46px;text-align:center;font-size:6.5px;line-height:8px;font-weight:bold;color:#7c7c7c;-webkit-text-stroke:0.3px #7c7c7c">6</div>
<div class="ab" style="left:1066px;top:154px;width:47px;height:19px;background:#ffffff"></div>
<div class="ab" style="left:1065px;top:154px;width:1px;height:19px;background:#a8a8a8"></div>
<div class="ab" style="left:1065px;top:182px;width:1px;height:51px;background:#a8a8ac"></div>
<div class="ab" style="left:1113px;top:144px;width:48px;height:9px;background:#ff0000"></div>
<div class="ab" style="left:1112px;top:143px;width:1px;height:10px;background:#808080"></div>
<div class="t" style="left:1113px;top:145px;width:47px;text-align:center;font-size:6.5px;line-height:8px;font-weight:bold;color:#7c7c7c;-webkit-text-stroke:0.3px #7c7c7c">7</div>
<div class="ab" style="left:1113px;top:154px;width:48px;height:19px;background:#ffffff"></div>
<div class="ab" style="left:1112px;top:154px;width:1px;height:19px;background:#a8a8a8"></div>
<div class="ab" style="left:1112px;top:182px;width:1px;height:51px;background:#a8a8ac"></div>
<div class="t" style="left:943.45px;top:159.30px;font-size:8.5px;line-height:8.5px;color:#000;transform:scaleX(0.8352);transform-origin:0 0;-webkit-text-stroke:0.25px #000">7.C</div>
<div class="t" style="left:945.57px;top:134.07px;font-size:7px;line-height:7px;font-weight:bold;color:#767676;transform:scaleX(1.2500);transform-origin:0 0;">Wednesday</div>
<div class="ab" style="left:219px;top:144px;width:47px;height:9px;border:2px solid #ffff20;background:#00ff00"></div>
<div class="t" style="left:218px;top:145px;width:47px;text-align:center;font-size:6.5px;line-height:8px;font-weight:bold;color:#7c7c7c;-webkit-text-stroke:0.3px #7c7c7c">4</div>
<div class="ab" style="left:2px;top:154px;width:28px;height:19px;background:#e6e6e8"></div>
<div class="ab" style="left:2px;top:174px;width:997px;height:7px;background:#e6e6e8"></div>
<div class="ab" style="left:2px;top:182px;width:28px;height:25px;background:#ffff33"></div>
<div class="ab" style="left:2px;top:153px;width:997px;height:1px;background:#000"></div>
<div class="ab" style="left:2px;top:173px;width:997px;height:1px;background:#000"></div>
<div class="ab" style="left:2px;top:181px;width:997px;height:1px;background:#000"></div>
<div class="ab" style="left:2px;top:207px;width:997px;height:1px;background:#000"></div>
<div class="ab" style="left:3px;top:233px;width:996px;height:1px;background:#000"></div>
<div class="ab" style="left:30px;top:131px;width:1px;height:22px;background:#808080"></div>
<div class="ab" style="left:30px;top:153px;width:1px;height:54px;background:#000"></div>
<div class="ab" style="left:30px;top:207px;width:1px;height:26px;background:#707070"></div>
<div class="ab" style="left:406px;top:131px;width:1px;height:102px;background:#000"></div>
<div class="ab" style="left:783px;top:131px;width:1px;height:102px;background:#000"></div>
<div class="t" style="left:9.50px;top:157.51px;font-size:10.5px;line-height:10.5px;color:#000;transform:scaleX(0.9566);transform-origin:0 0;">Za</div>
<div class="t" style="left:9.01px;top:189.71px;font-size:10.5px;line-height:10.5px;color:#000;transform:scaleX(0.9399);transform-origin:0 0;">H1</div>
<div class="t" style="left:8.63px;top:216.01px;font-size:10.5px;line-height:10.5px;color:#000;transform:scaleX(1.0397);transform-origin:0 0;">H2</div>
<div class="ab" style="left:360px;top:182px;width:46px;height:25px;background:linear-gradient(#dcfcdc,#60ee60)"></div>
<div class="ab" style="left:219px;top:208px;width:46px;height:25px;background:linear-gradient(#6cfa6c,#00ff00 35%)"></div>
<div class="t" style="left:233.98px;top:214.34px;font-size:12px;line-height:12px;color:#000;transform:scaleX(0.8631);transform-origin:0 0;">7.B</div>
<div class="t" style="left:374.15px;top:189.84px;font-size:12px;line-height:12px;color:#000;transform:scaleX(1.0204);transform-origin:0 0;">8.C</div>
<div class="box" style="left:65px;top:158px;width:24px;height:11px;background:#d0d0d6"></div>
<div class="box" style="left:112px;top:158px;width:24px;height:11px;background:#d0d0d6"></div>
<div class="box" style="left:206px;top:158px;width:25px;height:11px;background:#ffff00"></div>
<div class="box" style="left:253px;top:158px;width:25px;height:11px;background:#ffff00"><div class="t" style="left:0;top:0px;width:23px;text-align:center;font-size:9px;line-height:10px;color:#000;-webkit-text-stroke:0.15px #000">?</div></div>
<div class="box" style="left:65px;top:187px;width:24px;height:14px;background:#c800c8"></div>
<div class="box" style="left:112px;top:187px;width:24px;height:14px;background:#18c0c0"></div>
<div class="box" style="left:159px;top:187px;width:25px;height:14px;background:#1818c8"></div>
<div class="box" style="left:206px;top:187px;width:25px;height:14px;background:#18c018"></div>
<div class="box" style="left:253px;top:187px;width:25px;height:14px;background:#d0d0d6"><div class="t" style="left:0;top:1px;width:23px;text-align:center;font-size:9px;line-height:10px;color:#000;-webkit-text-stroke:0.15px #000">?</div></div>
<div class="box" style="left:300px;top:187px;width:25px;height:14px;background:#66ffc0"></div>
<div class="box" style="left:347px;top:187px;width:25px;height:14px;background:#00ee00"></div>
<div class="box" style="left:442px;top:187px;width:24px;height:14px;background:#ff8080"></div>
<div class="box" style="left:489px;top:187px;width:24px;height:14px;background:#00ee00"></div>
<div class="box" style="left:536px;top:187px;width:24px;height:14px;background:#ff8000"></div>
<div class="box" style="left:583px;top:187px;width:24px;height:14px;background:#800000"></div>
<div class="box" style="left:630px;top:187px;width:25px;height:14px;background:#800000"></div>
<div class="box" style="left:677px;top:187px;width:25px;height:14px;background:#c800c8"></div>
<div class="box" style="left:724px;top:187px;width:25px;height:14px;background:#80ff80"></div>
<div class="box" style="left:818px;top:187px;width:25px;height:14px;background:#80c0ff"></div>
<div class="box" style="left:866px;top:187px;width:24px;height:14px;background:#001060"></div>
<div class="box" style="left:913px;top:187px;width:24px;height:14px;background:#00c090"></div>
<div class="box" style="left:960px;top:187px;width:24px;height:14px;background:#00ffc0"></div>
<div class="box" style="left:65px;top:213px;width:24px;height:14px;background:#18c018"></div>
<div class="box" style="left:112px;top:213px;width:24px;height:14px;background:#18c018"></div>
<div class="box" style="left:159px;top:213px;width:25px;height:14px;background:#ff00ff"></div>
<div class="box" style="left:206px;top:213px;width:25px;height:14px;background:#ff8000"></div>
<div class="box" style="left:253px;top:213px;width:25px;height:14px;background:#0010c8"></div>
<div class="t" style="left:32.25px;top:153.87px;font-size:20px;line-height:20px;font-weight:bold;color:#ea1c25;transform:scaleX(1.0946);transform-origin:0 0;">3.</div>
<div class="t" style="left:116.02px;top:168.77px;font-size:20px;line-height:20px;font-weight:bold;color:#ea1c25;transform:scaleX(1.1293);transform-origin:0 0;">5.</div>
<div class="t" style="left:210.87px;top:168.77px;font-size:20px;line-height:20px;font-weight:bold;color:#ea1c25;transform:scaleX(1.1067);transform-origin:0 0;">4.</div>
<div class="t" style="left:256.60px;top:168.77px;font-size:20px;line-height:20px;font-weight:bold;color:#ea1c25;transform:scaleX(1.1370);transform-origin:0 0;">6.</div>
<div class="ab" style="left:275px;top:194px;width:717px;height:444px;background:#fafafa;border:1px solid #8d8d8d;border-radius:3px;box-shadow:inset 0 0 0 1px #fff,3px 3px 4px rgba(0,0,0,.35)"></div>
<div class="ab" style="left:276px;top:195px;width:257px;height:28px;background:#e1ecfb"></div>
<div class="t" style="left:283.83px;top:203.84px;font-size:12px;line-height:12px;font-weight:bold;color:#2c4b93;transform:scaleX(0.9700);transform-origin:0 0;-webkit-text-stroke:0">4/5 (15)</div>
<div class="ab" style="left:276px;top:223px;width:26px;height:414px;background:#e8ecef"></div>
<div class="ab" style="left:302px;top:223px;width:1px;height:414px;background:#c8c8c8"></div>
<div class="ab" style="left:533px;top:195px;width:1px;height:442px;background:#c8c8c8"></div>
<div class="ab" style="left:783px;top:195px;width:1px;height:442px;background:#c8c8c8"></div>
<div class="t" style="left:310.48px;top:228.69px;font-size:11px;line-height:11px;color:#15155f;transform:scaleX(1.0407);transform-origin:0 0;">Remove room supervision</div>
<div class="t" style="left:310.52px;top:250.69px;font-size:11px;line-height:11px;color:#15155f;transform:scaleX(1.0031);transform-origin:0 0;">Lock</div>
<div class="t" style="left:310.80px;top:272.69px;font-size:11px;line-height:11px;color:#15155f;transform:scaleX(1.0832);transform-origin:0 0;">Count</div>
<div class="t" style="left:310.83px;top:296.69px;font-size:11px;line-height:11px;color:#15155f;transform:scaleX(1.0284);transform-origin:0 0;">Generate</div>
<div class="t" style="left:310.49px;top:318.69px;font-size:11px;line-height:11px;color:#15155f;transform:scaleX(1.0376);transform-origin:0 0;">Remove all teachers from supervision</div>
<div class="t" style="left:311.34px;top:342.69px;font-size:11px;line-height:11px;color:#15155f;transform:scaleX(1.0862);transform-origin:0 0;">Without teacher</div>
<div class="ab" style="left:519px;top:273.5px;width:0;height:0;border-top:4px solid transparent;border-bottom:4px solid transparent;border-left:4px solid #404a70"></div>
<div class="ab" style="left:311px;top:289px;width:222px;height:1px;background:#d0d0d0"></div>
<div class="ab" style="left:311px;top:335px;width:222px;height:1px;background:#d0d0d0"></div>
<div class="ab" style="left:280px;top:338px;width:20px;height:20px;background:#fde3a0;border:1px solid #f2a448;border-radius:3px"></div>
<svg class="ab" style="left:0;top:0" width="310" height="360"><path d="M285.8,348 L288.4,353 L293.8,342.2" fill="none" stroke="#1c2a88" stroke-width="1.5" stroke-linejoin="round"/></svg>
<div class="sq g" style="left:283px;top:367px"></div>
<div class="sq g" style="left:291px;top:367px"></div>
<div class="t" style="left:310.73px;top:364.69px;font-size:11px;line-height:11px;color:#15155f;transform:scaleX(1.0140);transform-origin:0 0;">(Ma) Matilda Peeters (20/2)</div>
<div class="sq g" style="left:283px;top:389px"></div>
<div class="sq b" style="left:291px;top:389px"></div>
<div class="t" style="left:310.72px;top:386.69px;font-size:11px;line-height:11px;color:#15155f;transform:scaleX(1.0324);transform-origin:0 0;">(Ab) Abigail Romano (30/2)</div>
<div class="sq g" style="left:283px;top:411px"></div>
<div class="sq b" style="left:291px;top:411px"></div>
<div class="t" style="left:310.73px;top:408.69px;font-size:11px;line-height:11px;color:#15155f;transform:scaleX(1.0220);transform-origin:0 0;">(Wi) William Clark (20/2)</div>
<div class="sq g" style="left:283px;top:433px"></div>
<div class="sq b" style="left:291px;top:433px"></div>
<div class="t" style="left:310.74px;top:430.69px;font-size:11px;line-height:11px;color:#15155f;transform:scaleX(0.9933);transform-origin:0 0;">(Ha) Hannah Evans (30/2)</div>
<div class="sq b" style="left:283px;top:455px"></div>
<div class="sq g" style="left:291px;top:455px"></div>
<div class="t" style="left:310.75px;top:452.69px;font-size:11px;line-height:11px;color:#15155f;transform:scaleX(0.9921);transform-origin:0 0;">(El) Elizabeth Pereira (20/2)</div>
<div class="sq b" style="left:283px;top:477px"></div>
<div class="sq g" style="left:291px;top:477px"></div>
<div class="t" style="left:310.75px;top:474.69px;font-size:11px;line-height:11px;color:#15155f;transform:scaleX(0.9826);transform-origin:0 0;">(Ju) Julia Thomas (15/1)</div>
<div class="sq b" style="left:283px;top:499px"></div>
<div class="sq g" style="left:291px;top:499px"></div>
<div class="t" style="left:310.74px;top:496.69px;font-size:11px;line-height:11px;color:#15155f;transform:scaleX(1.0065);transform-origin:0 0;">(Ha) Hannah Rocha (30/2)</div>
<div class="sq g" style="left:283px;top:521px"></div>
<div class="sq o" style="left:291px;top:521px"></div>
<div class="t" style="left:310.72px;top:518.69px;font-size:11px;line-height:11px;color:#15155f;transform:scaleX(1.0288);transform-origin:0 0;">(Al) Alexandre Wallner (30/2)</div>
<div class="sq g" style="left:283px;top:543px"></div>
<div class="sq o" style="left:291px;top:543px"></div>
<div class="t" style="left:310.75px;top:540.69px;font-size:11px;line-height:11px;color:#15155f;transform:scaleX(0.9781);transform-origin:0 0;">(Ta) Taylor Mayer (30/2)</div>
<div class="sq g" style="left:283px;top:565px"></div>
<div class="sq o" style="left:291px;top:565px"></div>
<div class="t" style="left:310.73px;top:562.69px;font-size:11px;line-height:11px;color:#15155f;transform:scaleX(1.0172);transform-origin:0 0;">(Wi) Wilma Steiner (15/1)</div>
<div class="sq o" style="left:283px;top:587px"></div>
<div class="sq g" style="left:291px;top:587px"></div>
<div class="t" style="left:310.75px;top:584.69px;font-size:11px;line-height:11px;color:#15155f;transform:scaleX(0.9788);transform-origin:0 0;">(Fr) Francesca Chan (30/2)</div>
<div class="sq o" style="left:283px;top:609px"></div>
<div class="sq g" style="left:291px;top:609px"></div>
<div class="t" style="left:310.74px;top:606.69px;font-size:11px;line-height:11px;color:#15155f;transform:scaleX(0.9946);transform-origin:0 0;">(El) Eloise Almeida (15/1)</div>
<div class="sq o" style="left:541px;top:204px"></div>
<div class="sq g" style="left:549px;top:204px"></div>
<div class="t" style="left:568.94px;top:201.69px;font-size:11px;line-height:11px;color:#15155f;transform:scaleX(1.0011);transform-origin:0 0;">(Da) Daniel Costa (15/1)</div>
<div class="sq b" style="left:541px;top:226px"></div>
<div class="sq b" style="left:549px;top:226px"></div>
<div class="t" style="left:568.93px;top:223.69px;font-size:11px;line-height:11px;color:#15155f;transform:scaleX(1.0132);transform-origin:0 0;">(Ka) Kayleigh Brown</div>
<div class="sq b" style="left:541px;top:248px"></div>
<div class="sq b" style="left:549px;top:248px"></div>
<div class="t" style="left:568.94px;top:245.69px;font-size:11px;line-height:11px;color:#15155f;transform:scaleX(1.0060);transform-origin:0 0;">(Je) Jennifer Zellweger (15/1)</div>
<div class="sq b" style="left:541px;top:270px"></div>
<div class="sq b" style="left:549px;top:270px"></div>
<div class="t" style="left:568.94px;top:267.69px;font-size:11px;line-height:11px;color:#15155f;transform:scaleX(1.0011);transform-origin:0 0;">(Lu) Lucie Rodríguez (30/2)</div>
<div class="sq b" style="left:541px;top:292px"></div>
<div class="sq b" style="left:549px;top:292px"></div>
<div class="t" style="left:568.94px;top:289.69px;font-size:11px;line-height:11px;color:#15155f;transform:scaleX(1.0032);transform-origin:0 0;">(Ma) Marie Taylor (20/2)</div>
<div class="sq b" style="left:541px;top:314px"></div>
<div class="sq b" style="left:549px;top:314px"></div>
<div class="t" style="left:568.95px;top:311.69px;font-size:11px;line-height:11px;color:#15155f;transform:scaleX(0.9891);transform-origin:0 0;">(Ja) Jade Wagner (15/1)</div>
<div class="sq b" style="left:541px;top:336px"></div>
<div class="sq b" style="left:549px;top:336px"></div>
<div class="t" style="left:568.94px;top:333.69px;font-size:11px;line-height:11px;color:#15155f;transform:scaleX(1.0032);transform-origin:0 0;">(Al) Alexander Fischer (30/2)</div>
<div class="sq b" style="left:541px;top:358px"></div>
<div class="sq b" style="left:549px;top:358px"></div>
<div class="t" style="left:568.92px;top:355.69px;font-size:11px;line-height:11px;color:#15155f;transform:scaleX(1.0259);transform-origin:0 0;">(Gu) Gustav Wright (30/2)</div>
<div class="sq b" style="left:541px;top:380px"></div>
<div class="sq b" style="left:549px;top:380px"></div>
<div class="t" style="left:568.94px;top:377.69px;font-size:11px;line-height:11px;color:#15155f;transform:scaleX(0.9994);transform-origin:0 0;">(Ol) Olivia Sanchez (20/2)</div>
<div class="sq b" style="left:541px;top:402px"></div>
<div class="sq b" style="left:549px;top:402px"></div>
<div class="t" style="left:568.94px;top:399.69px;font-size:11px;line-height:11px;color:#15155f;transform:scaleX(1.0073);transform-origin:0 0;">(Ew) Ewan Hernández (20/2)</div>
<div class="sq b" style="left:541px;top:424px"></div>
<div class="sq b" style="left:549px;top:424px"></div>
<div class="t" style="left:568.95px;top:421.69px;font-size:11px;line-height:11px;color:#15155f;transform:scaleX(0.9861);transform-origin:0 0;">(El) Eloise Egger (30/2)</div>
<div class="sq b" style="left:541px;top:446px"></div>
<div class="sq b" style="left:549px;top:446px"></div>
<div class="t" style="left:568.93px;top:443.69px;font-size:11px;line-height:11px;color:#15155f;transform:scaleX(1.0135);transform-origin:0 0;">(El) Eloise Weinberger (30/2)</div>
<div class="sq b" style="left:541px;top:468px"></div>
<div class="sq o" style="left:549px;top:468px"></div>
<div class="t" style="left:568.92px;top:465.69px;font-size:11px;line-height:11px;color:#15155f;transform:scaleX(1.0282);transform-origin:0 0;">(An) Antoine FisherSchwegler (15/1)</div>
<div class="sq b" style="left:541px;top:490px"></div>
<div class="sq o" style="left:549px;top:490px"></div>
<div class="t" style="left:568.95px;top:487.69px;font-size:11px;line-height:11px;color:#15155f;transform:scaleX(0.9860);transform-origin:0 0;">(Pe) Peter Hofer (15/1)</div>
<div class="sq b" style="left:541px;top:512px"></div>
<div class="sq o" style="left:549px;top:512px"></div>
<div class="t" style="left:568.97px;top:509.69px;font-size:11px;line-height:11px;color:#15155f;transform:scaleX(0.9578);transform-origin:0 0;">(Le) Lea Sousa (15/1)</div>
<div class="sq b" style="left:541px;top:534px"></div>
<div class="sq o" style="left:549px;top:534px"></div>
<div class="t" style="left:568.93px;top:531.69px;font-size:11px;line-height:11px;color:#15155f;transform:scaleX(1.0076);transform-origin:0 0;">(Am) Amanda Nelson (30/2)</div>
<div class="sq b" style="left:541px;top:556px"></div>
<div class="sq o" style="left:549px;top:556px"></div>
<div class="t" style="left:568.95px;top:553.69px;font-size:11px;line-height:11px;color:#15155f;transform:scaleX(0.9880);transform-origin:0 0;">(El) Eloise Perrot</div>
<div class="sq b" style="left:541px;top:578px"></div>
<div class="sq o" style="left:549px;top:578px"></div>
<div class="t" style="left:568.96px;top:575.69px;font-size:11px;line-height:11px;color:#15155f;transform:scaleX(0.9695);transform-origin:0 0;">(La) Laura Parker (15/1)</div>
<div class="sq b" style="left:541px;top:600px"></div>
<div class="sq o" style="left:549px;top:600px"></div>
<div class="t" style="left:568.93px;top:597.69px;font-size:11px;line-height:11px;color:#15155f;transform:scaleX(1.0110);transform-origin:0 0;">(Ol) Olivia Jenkins (20/2)</div>
<div class="sq o" style="left:541px;top:622px"></div>
<div class="sq b" style="left:549px;top:622px"></div>
<div class="t" style="left:568.95px;top:619.69px;font-size:11px;line-height:11px;color:#15155f;transform:scaleX(0.9924);transform-origin:0 0;">(Sp) Spencer Carreiro (30/2)</div>
<div class="sq o" style="left:791px;top:204px"></div>
<div class="sq b" style="left:799px;top:204px"></div>
<div class="t" style="left:818.74px;top:201.69px;font-size:11px;line-height:11px;color:#15155f;transform:scaleX(1.0002);transform-origin:0 0;">(As) Ashley Campbell (30/2)</div>
<div class="sq o" style="left:791px;top:226px"></div>
<div class="sq b" style="left:799px;top:226px"></div>
<div class="t" style="left:818.74px;top:223.69px;font-size:11px;line-height:11px;color:#15155f;transform:scaleX(0.9956);transform-origin:0 0;">(Et) Ethan Zimmer</div>
<div class="sq o" style="left:791px;top:248px"></div>
<div class="sq b" style="left:799px;top:248px"></div>
<div class="t" style="left:818.75px;top:245.69px;font-size:11px;line-height:11px;color:#15155f;transform:scaleX(0.9907);transform-origin:0 0;">(Ta) Taylor Schwender (30/2)</div>
<div class="sq o" style="left:791px;top:270px"></div>
<div class="sq b" style="left:799px;top:270px"></div>
<div class="t" style="left:818.74px;top:267.69px;font-size:11px;line-height:11px;color:#15155f;transform:scaleX(0.9974);transform-origin:0 0;">(Si) Simon Scott (15/1)</div>
<div class="sq o" style="left:791px;top:292px"></div>
<div class="sq b" style="left:799px;top:292px"></div>
<div class="t" style="left:818.75px;top:289.69px;font-size:11px;line-height:11px;color:#15155f;transform:scaleX(0.9794);transform-origin:0 0;">(Cl) Clara Gomes (30/2)</div>
<div class="sq o" style="left:791px;top:314px"></div>
<div class="sq b" style="left:799px;top:314px"></div>
<div class="t" style="left:818.73px;top:311.69px;font-size:11px;line-height:11px;color:#15155f;transform:scaleX(1.0144);transform-origin:0 0;">(Ch) Chloe Phillips (20/2)</div>
<div class="sq o" style="left:791px;top:336px"></div>
<div class="sq o" style="left:799px;top:336px"></div>
<div class="t" style="left:818.77px;top:333.69px;font-size:11px;line-height:11px;color:#15155f;transform:scaleX(0.9589);transform-origin:0 0;">(Ka) Kayla Davies (15/1)</div>
<div class="sq o" style="left:791px;top:358px"></div>
<div class="sq o" style="left:799px;top:358px"></div>
<div class="t" style="left:818.76px;top:355.69px;font-size:11px;line-height:11px;color:#15155f;transform:scaleX(0.9642);transform-origin:0 0;">(Le) Lea Lang (30/2)</div>
<div class="sq o" style="left:791px;top:380px"></div>
<div class="sq o" style="left:799px;top:380px"></div>
<div class="t" style="left:818.74px;top:377.69px;font-size:11px;line-height:11px;color:#15155f;transform:scaleX(1.0002);transform-origin:0 0;">(Su) Summer Conti (15/1)</div>
<div class="sq o" style="left:791px;top:402px"></div>
<div class="sq o" style="left:799px;top:402px"></div>
<div class="t" style="left:818.75px;top:399.69px;font-size:11px;line-height:11px;color:#15155f;transform:scaleX(0.9895);transform-origin:0 0;">(Za) Zachary Svoboda (40/4)</div>
<div class="sq o" style="left:791px;top:424px"></div>
<div class="sq o" style="left:799px;top:424px"></div>
<div class="t" style="left:818.74px;top:421.69px;font-size:11px;line-height:11px;color:#15155f;transform:scaleX(1.0042);transform-origin:0 0;">(An) Anna Peeters</div>
<div class="sq o" style="left:791px;top:446px"></div>
<div class="sq o" style="left:799px;top:446px"></div>
<div class="t" style="left:818.75px;top:443.69px;font-size:11px;line-height:11px;color:#15155f;transform:scaleX(0.9885);transform-origin:0 0;">(Li) Linnea Torres</div>
<div class="sq r" style="left:794px;top:468px"></div>
<div class="t" style="left:818.74px;top:465.69px;font-size:11px;line-height:11px;color:#15155f;transform:scaleX(0.9927);transform-origin:0 0;">(Li) Linnea Fuchs (15/1)</div>
<div class="ab" style="left:273px;top:359px;width:37px;height:273px;border:5px solid #ea1c25"></div>
<div class="ab" style="left:786px;top:458px;width:175px;height:30px;border:5px solid #ea1c25"></div>
<div class="t" style="left:249.71px;top:365.87px;font-size:20px;line-height:20px;font-weight:bold;color:#ea1c25;transform:scaleX(1.1429);transform-origin:0 0;">1.</div>
<div class="t" style="left:766.65px;top:462.47px;font-size:20px;line-height:20px;font-weight:bold;color:#ea1c25;transform:scaleX(1.0685);transform-origin:0 0;">2.</div>
</body></html>
